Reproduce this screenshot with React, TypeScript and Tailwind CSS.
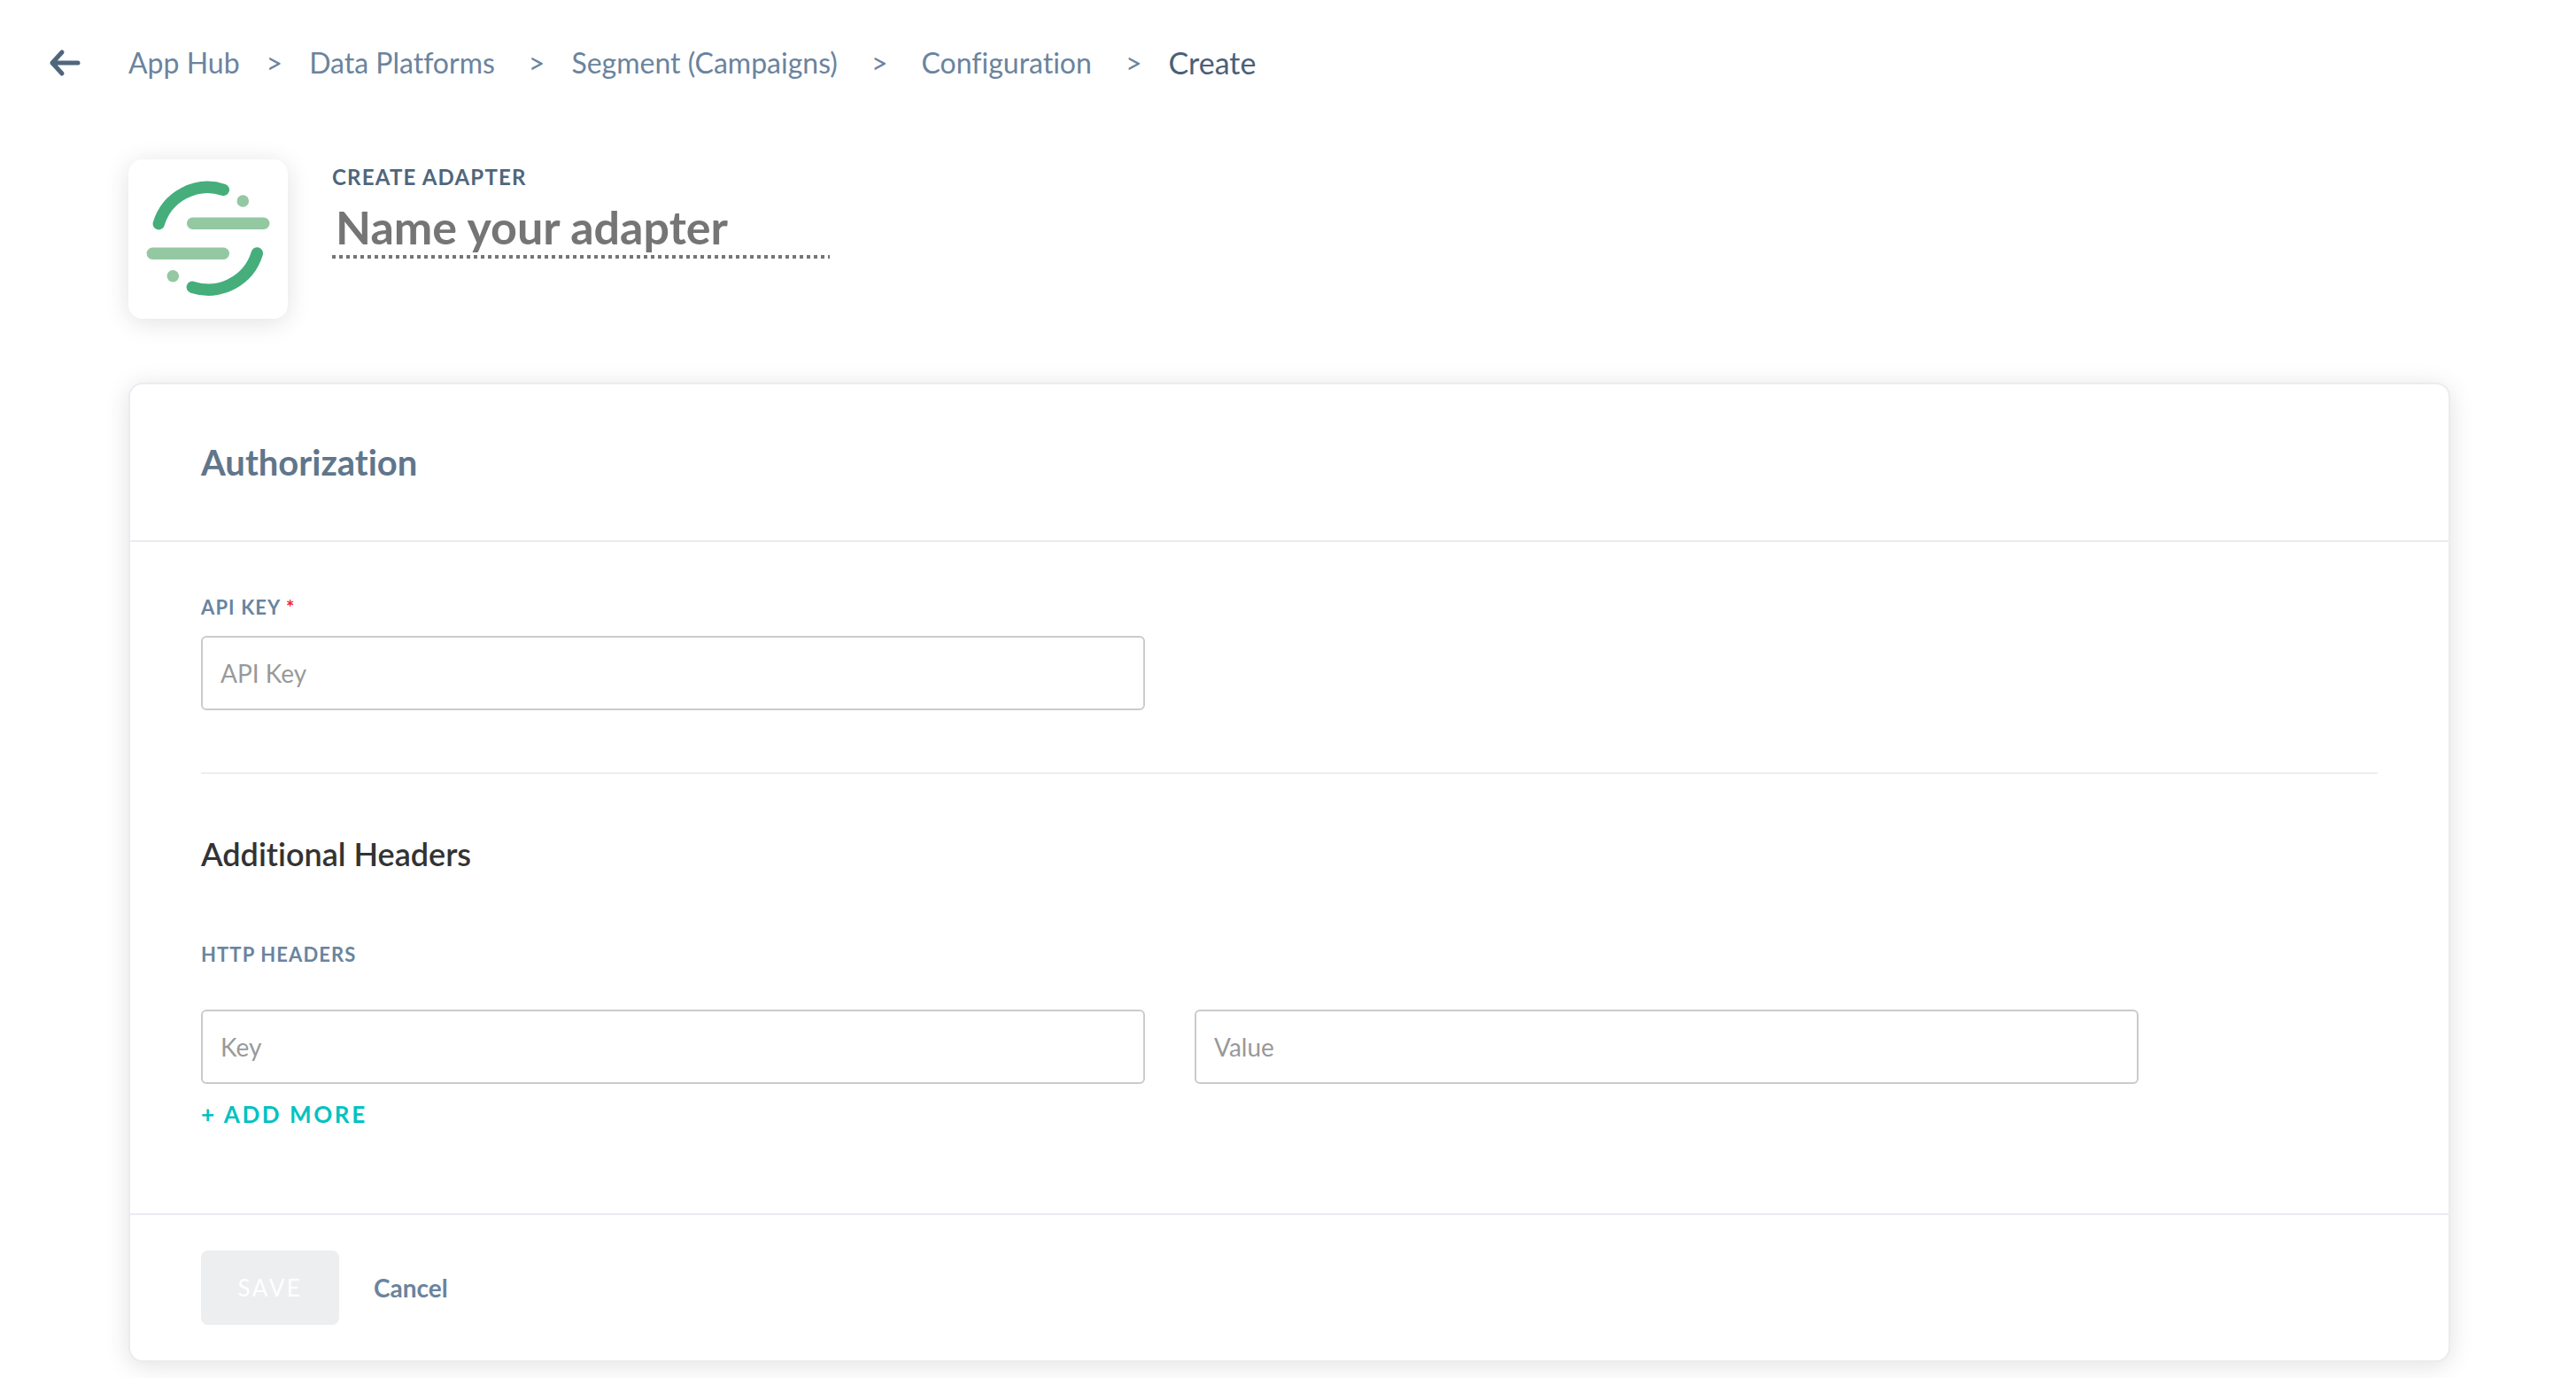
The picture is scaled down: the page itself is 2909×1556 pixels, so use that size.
import { useState } from 'react';
import type { InputHTMLAttributes } from 'react';

const crumbs = [
  { label: 'App Hub', gap: 'mx-[30px]' },
  { label: 'Data Platforms', gap: 'ml-[38px] mr-[30px]' },
  { label: 'Segment (Campaigns)', gap: 'mx-[38px]' },
  { label: 'Configuration', gap: 'ml-[38px] mr-[30px]' },
];

const BackArrow = () => (
  <svg viewBox="0 0 36 32" className="h-8 w-9" fill="none" stroke="#4f667c" strokeWidth="5" strokeLinecap="round" strokeLinejoin="round">
    <path d="M33 16H4M15 4L4 16l11 12" />
  </svg>
);

const SegmentLogo = () => (
  <svg viewBox="0 0 180 180" className="h-full w-full" fill="none" strokeWidth="13.4" strokeLinecap="round">
    <path d="M34.3 72.7A57.7 57.7 0 0 1 107.3 34.3" stroke="#45ae7b" />
    <path d="M145.3 106A57.7 57.7 0 0 1 72.3 144.3" stroke="#45ae7b" />
    <path d="M72.7 72.3H152.7M27.3 106.3H107.3" stroke="#93c8a2" />
    <circle cx="129.3" cy="47" r="6.8" fill="#93c8a2" />
    <circle cx="50.3" cy="131.7" r="6.8" fill="#93c8a2" />
  </svg>
);

const TextInput = (props: InputHTMLAttributes<HTMLInputElement>) => (
  <input
    type="text"
    className="h-[84px] w-full rounded-md border-2 border-[#cbcbcb] bg-white px-5 text-[28px] text-[#333] outline-none placeholder:text-[#999] focus:border-[#00c2c2]"
    {...props}
  />
);

const Breadcrumbs = () => (
  <nav aria-label="Breadcrumb" className="flex h-[142px] items-center text-[32px] leading-10 text-[#6a849e]">
    <a href="#back" aria-label="Back" className="flex w-[145px] pl-[55px]">
      <BackArrow />
    </a>
    {crumbs.map(({ label, gap }) => (
      <div key={label} className="flex items-center">
        <a href="#crumb" className="hover:underline">{label}</a>
        <span className={gap}>&gt;</span>
      </div>
    ))}
    <span className="text-[34px] text-[#4a6078]">Create</span>
  </nav>
);

export default function App() {
  const [name, setName] = useState('');
  const [headers, setHeaders] = useState([0]);

  return (
    <div className="min-h-screen bg-white pb-[18px] font-['Lato',sans-serif] [font-variant-ligatures:none]">
      <Breadcrumbs />

      <main className="pl-[145px] pr-[142px]">
        <div className="mt-[38px] flex gap-[50px]">
          <div className="h-[180px] w-[180px] rounded-2xl bg-white shadow-[0_4px_28px_rgba(0,0,0,0.12)]">
            <SegmentLogo />
          </div>
          <div className="flex flex-col">
            <label htmlFor="adapter-name" className="mt-1 text-2xl font-bold tracking-wider text-[#4f667c] uppercase">
              Create adapter
            </label>
            <input
              id="adapter-name"
              value={name}
              onChange={(e) => setName(e.target.value)}
              placeholder="Name your adapter"
              className="h-[72px] w-[562px] px-1 pt-2 text-[52px] font-bold text-[#4f667c] outline-none placeholder:text-[#757575]"
            />
            <div className="h-1 bg-[repeating-linear-gradient(90deg,#757575_0_4px,transparent_4px_8px)]" />
          </div>
        </div>

        <form
          onSubmit={(e) => e.preventDefault()}
          className="mt-[72px] rounded-2xl border-2 border-[#ebecf2] bg-white shadow-[0_4px_28px_rgba(0,0,0,0.12)]"
        >
          <header className="flex h-[178px] items-center border-b-2 border-[#ebecf2] px-20">
            <h2 className="text-[40px] font-bold text-[#60768b]">Authorization</h2>
          </header>

          <div className="px-20 pt-[58px] pb-[92px]">
            <div className="grid grid-cols-2 gap-14 pr-[270px]">
              <div>
                <label htmlFor="api-key" className="block text-[22px] leading-8 font-bold tracking-wider text-[#6a849e]">
                  API KEY <span className="text-[#f5222d]">*</span>
                </label>
                <div className="mt-4">
                  <TextInput id="api-key" placeholder="API Key" required />
                </div>
              </div>
            </div>

            <hr className="mt-[70px] border-t-2 border-[#eee]" />

            <h3 className="mt-16 text-[36px] leading-[52px] font-semibold text-[#333]">Additional Headers</h3>

            <fieldset className="mt-[72px]">
              <legend className="text-[22px] leading-8 font-bold tracking-wider text-[#6a849e]">HTTP HEADERS</legend>
              <div className="mt-[46px] flex flex-col gap-4">
                {headers.map((id) => (
                  <div key={id} className="grid grid-cols-2 gap-14 pr-[270px]">
                    <TextInput aria-label="Key" placeholder="Key" />
                    <TextInput aria-label="Value" placeholder="Value" />
                  </div>
                ))}
              </div>
            </fieldset>

            <button
              type="button"
              onClick={() => setHeaders([...headers, headers.length])}
              className="mt-[14px] block text-[26px] leading-10 font-bold tracking-widest text-[#00c2c2]"
            >
              + ADD MORE
            </button>
          </div>

          <footer className="flex items-center gap-[39px] border-t-2 border-[#ebecf2] px-20 py-10">
            <button type="submit" disabled className="h-[84px] w-[156px] rounded-lg bg-[#edeef0] text-[26px] tracking-widest text-white">
              SAVE
            </button>
            <button type="button" className="text-[28px] font-bold text-[#6a849e]">Cancel</button>
          </footer>
        </form>
      </main>
    </div>
  );
}
